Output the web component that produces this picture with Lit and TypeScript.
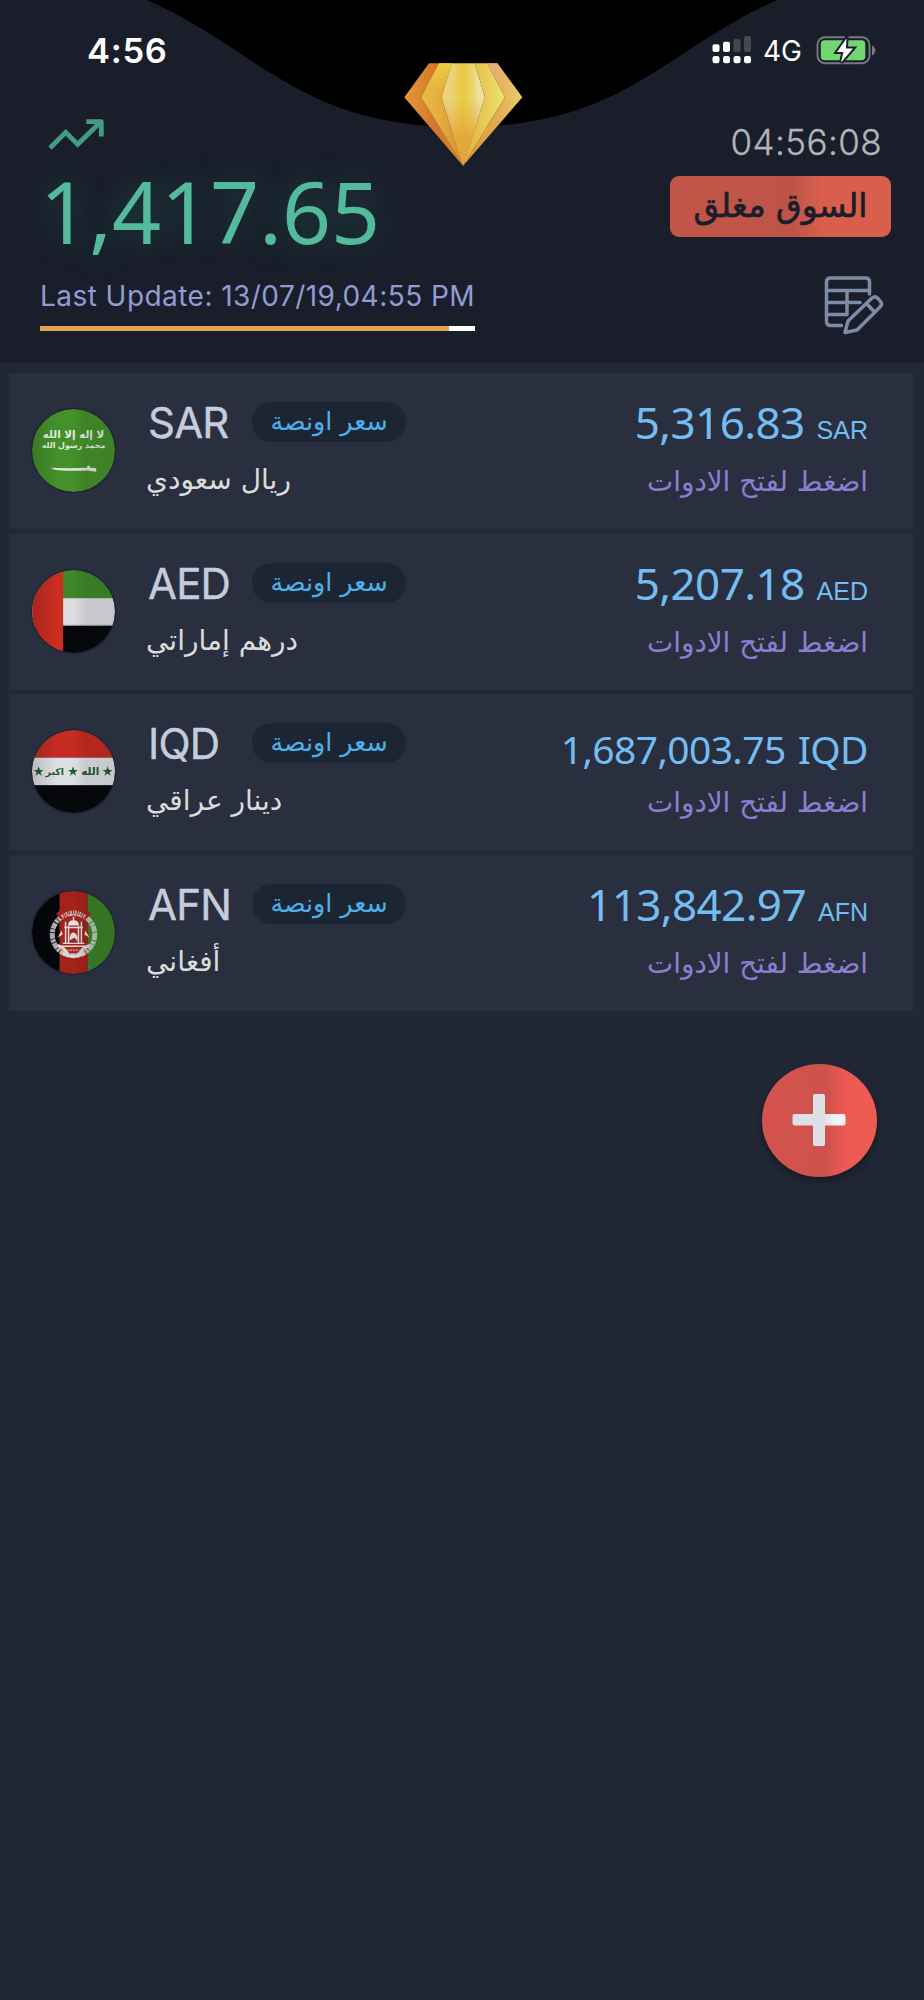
import { LitElement, html, css, svg } from "lit";
import { customElement, property } from "lit/decorators.js";
import { classMap } from "lit/directives/class-map.js";

interface Rate {
    code: string;
    name: string;
    amount: string;
    plain?: boolean;
}

const RATES: Rate[] = [
    { code: "SAR", name: "ريال سعودي", amount: "5,316.83" },
    { code: "AED", name: "درهم إماراتي", amount: "5,207.18" },
    { code: "IQD", name: "دينار عراقي", amount: "1,687,003.75", plain: true },
    { code: "AFN", name: "أفغاني", amount: "113,842.97" }
];

const STAR = "M0 -5.2L1.3 -1.6L5 -1.6L2 .7L3.1 4.3L0 2.1L-3.1 4.3L-2 .7L-5 -1.6L-1.3 -1.6Z";

const flags: Record<string, unknown> = {
    SAR: svg`
        <rect width="84" height="84" fill="#44902a"/>
        <text class="script" x="42" y="29" font-size="10.5" fill="#e4ebe0">لا إله إلا الله</text>
        <text class="script" x="42" y="39.5" font-size="8" fill="#e4ebe0">محمد رسول الله</text>
        <path d="M19 59.5Q38 60.5 56 59.5V57.5H58.5V59.3L65 60V63.5L56 62.2Q34 63 23 61.5Z" fill="#e1e6dc"/>`,
    AED: svg`
        <rect width="84" height="28.5" fill="#3d8828"/>
        <rect y="28.5" width="84" height="28" fill="#dcdde1"/>
        <rect y="56" width="84" height="28" fill="#07080b"/>
        <rect y="55.5" width="84" height="1.2" fill="#8d8f94"/>
        <rect width="31.5" height="84" fill="#cb2d21"/>`,
    IQD: svg`
        <rect width="84" height="28" fill="#c52b20"/>
        <rect y="28" width="84" height="28" fill="#dedfe3"/>
        <rect y="56" width="84" height="28" fill="#06080b"/>
        <path d=${STAR} transform="translate(6.7 42)" fill="#205c31"/>
        <path d=${STAR} transform="translate(41.5 42)" fill="#205c31"/>
        <path d=${STAR} transform="translate(76.5 42)" fill="#205c31"/>
        <text class="script" x="23" y="45.5" font-size="9.5" fill="#205c31">اكبر</text>
        <text class="script" x="59" y="45.500" font-size="10.5" fill="#205c31">الله</text>`,
    AFN: svg`
        <rect width="28" height="84" fill="#050609"/>
        <rect x="28" width="28.5" height="84" fill="#a3231b"/>
        <rect x="56.5" width="28" height="84" fill="#3a8028"/>
        <circle cx="42" cy="44" r="21.500" fill="none" stroke="#d9d9d9" stroke-width="5" stroke-dasharray="4.600 .7 2.300 .5" pathLength="104" opacity=".8"/>
        <path d="M27 26Q42 11 57 26" fill="none" stroke="#a3231b" stroke-width="8"/>
        <path d="M30 26Q42 16.500 54 26" fill="none" stroke="#c9a8a5" stroke-width="3.400" stroke-dasharray="2 1 1 .8"/>
        <path d="M36.5 35Q36.5 29.5 42 29.5Q47.500 29.5 47.500 35Z" fill="#e8e4e4"/>
        <path d="M42 26V30M34 31V53M50 31V53M37 35V53M47 35V53M32.500 37H51.5M31 53H53M30 56H54" stroke="#e0dcdc" stroke-width="1.500" fill="none"/>
        <path d="M38 50Q38 42 42 42Q47 43 46 51L43 47Z" fill="#dedada"/>
        <path d="M26 47L30 40L31 44ZM58 47L54 40L53 44Z" fill="#e6e2e2"/>
        <path d="M26 55Q34 58 36 64M58 55Q50 58 48 64M31 63Q42 69 53 63" fill="none" stroke="#dcd8d8" stroke-width="3"/>
        <path d="M36 60H48" stroke="#c78a86" stroke-width="2" stroke-dasharray="2 .8"/>`
};

@customElement("rate-row")
export class RateRow extends LitElement {
    @property({ attribute: false }) rate!: Rate;

    static styles = css`
        :host {
            display: flex;
            box-sizing: border-box;
            height: 156px;
            padding: 0 45px 0 23px;
            background: #292f3e;
        }
        .flag {
            flex: none;
            width: 83px;
            height: 83px;
            margin-top: 36px;
            border-radius: 50%;
            box-shadow: 0 0 1px 1px #1d2430;
        }
        .script {
            font-family: "DejaVu Sans", sans-serif;
            font-weight: bold;
            text-anchor: middle;
        }
        .info {
            flex: 1;
            padding: 29px 0 0 31px;
        }
        .title {
            display: flex;
            height: 40px;
        }
        .code {
            width: 104px;
            padding-left: 2px;
            font: 400 42px/41px Inter, sans-serif;
            letter-spacing: -0.8px;
            color: #c5ccdb;
            -webkit-text-stroke: 0.4px #c5ccdb;
        }
        .pill {
            width: 154px;
            border-radius: 20px;
            background: #1c2532;
            color: #4fafea;
            font: 25.3px/39px "DejaVu Sans", sans-serif;
            text-align: center;
        }
        .name {
            margin-top: 17px;
            font: 28px/41px "DejaVu Sans", sans-serif;
            color: #dcdcdc;
            direction: rtl;
            width: fit-content;
        }
        .price {
            display: flex;
            flex-direction: column;
            align-items: flex-end;
            padding-top: 29px;
            color: #74bcf1;
        }
        .amount {
            font: 400 44px/40px "Noto Sans", sans-serif;
            height: 40px;
            letter-spacing: -0.6px;
            white-space: pre;
        }
        .unit {
            font: 25px/30px "Liberation Sans", sans-serif;
            margin-left: 12px;
            letter-spacing: 0;
        }
        .amount--plain {
            font-size: 39px;
            line-height: 52px;
        }
        .amount--plain .unit {
            font: inherit;
            letter-spacing: -0.6px;
        }
        .hint {
            margin-top: 19px;
            font: 27.8px/41px "DejaVu Sans", sans-serif;
            color: #8d7dd0;
            direction: rtl;
        }
    `;

    render() {
        const { code, name, amount, plain } = this.rate;
        return html`
            <svg class="flag" viewBox="0 0 84 84">
                <defs>
                    <clipPath id="round"><circle cx="42" cy="42" r="42"/></clipPath>
                    <linearGradient id="shade">
                        <stop offset="0" stop-color="#000" stop-opacity=".16"/>
                        <stop offset=".3" stop-color="#000" stop-opacity="0"/>
                        <stop offset=".5" stop-color="#000" stop-opacity="0"/>
                        <stop offset=".65" stop-color="#000" stop-opacity=".09"/>
                        <stop offset="1" stop-color="#000" stop-opacity=".1"/>
                    </linearGradient>
                </defs>
                <g clip-path="url(#round)">
                    ${flags[code]}
                    <rect width="84" height="84" fill="url(#shade)"/>
                </g>
            </svg>
            <div class="info">
                <div class="title">
                    <span class="code">${code}</span>
                    <span class="pill">سعر اونصة</span>
                </div>
                <div class="name">${name}</div>
            </div>
            <div class="price">
                <div class=${classMap({ amount: true, "amount--plain": !!plain })}>${amount}<span class="unit">${code}</span></div>
                <div class="hint">اضغط لفتح الادوات</div>
            </div>
        `;
    }
}

@customElement("app-root")
export class AppRoot extends LitElement {
    static styles = css`
        :host {
            display: block;
            min-height: 2000px;
            background: #212735;
            font-family: Inter, sans-serif;
        }
        .header {
            position: relative;
            box-sizing: border-box;
            height: 362px;
            padding: 31px 33px 0 40px;
            background: #191e2a;
        }
        .curve {
            position: absolute;
            top: 0;
            left: 0;
        }
        .status {
            position: relative;
            display: flex;
            justify-content: space-between;
            height: 40px;
            padding: 0 15px 0 47px;
            color: #fff;
        }
        .time {
            font-weight: 600;
            font-size: 34.5px;
            line-height: 40px;
            letter-spacing: 0.7px;
        }
        .status-icons {
            display: flex;
            height: 40px;
        }
        .network {
            width: 53px;
            margin-left: 11px;
            font-size: 28px;
            line-height: 41px;
        }
        .board {
            position: relative;
            display: flex;
            justify-content: space-between;
        }
        .trend {
            display: block;
            margin: 44px 0 0 6px;
        }
        .gold {
            margin-top: 11px;
            font: 400 86px/90px "Noto Sans", sans-serif;
            letter-spacing: -0.15px;
            color: #53ba9c;
            text-shadow: 0 0 34px rgba(60, 180, 150, 0.32);
        }
        .updated {
            margin-top: 22px;
            font-size: 28px;
            line-height: 36px;
            letter-spacing: 0.45px;
            color: #929bd2;
            white-space: nowrap;
        }
        .progress {
            width: 435px;
            height: 5px;
            margin-top: 12px;
            background: #fff;
        }
        .progress-bar {
            height: 100%;
            background: #e2a24f;
        }
        .side {
            display: flex;
            flex-direction: column;
            align-items: flex-end;
        }
        .clock {
            margin: 51px 9px 0 0;
            font-weight: 300;
            font-size: 35px;
            line-height: 40px;
            letter-spacing: 0.4px;
            color: #b3b4bb;
            -webkit-text-stroke: 0.3px #b3b4bb;
        }
        .market {
            width: 221px;
            height: 61px;
            margin-top: 14px;
            border-radius: 9px;
            background: linear-gradient(90deg, #c25648, #bd5447 55%, #d95e4b 68%, #d95e4b);
            color: #191e2a;
            font: 33px/60px "DejaVu Sans", sans-serif;
            -webkit-text-stroke: 0.7px #191e2a;
            text-align: center;
        }
        .edit {
            margin: 38px 6px 0 0;
        }
        .rates {
            display: grid;
            gap: 4.67px;
            padding: 11px 11px 0 9px;
        }
        .add {
            display: flex;
            align-items: center;
            justify-content: center;
            box-sizing: border-box;
            width: 115px;
            height: 113px;
            margin: 53px 47px 0 auto;
            padding-right: 2px;
            border-radius: 50%;
            background: linear-gradient(90deg, #d5534e, #ce514d 56%, #ec5a52 72%, #ee5a52);
            box-shadow: 0 4px 10px rgba(0, 0, 0, 0.35);
        }
    `;

    private renderCurve() {
        return html`
            <svg class="curve" width="924" height="170">
                <defs>
                    <linearGradient id="g1"><stop offset="0" stop-color="#e39a35"/><stop offset=".55" stop-color="#d4752b"/><stop offset="1" stop-color="#dc8a31"/></linearGradient>
                    <linearGradient id="g2"><stop offset="0" stop-color="#e6bd45"/><stop offset=".5" stop-color="#e3aa3c"/><stop offset="1" stop-color="#d88c34"/></linearGradient>
                    <linearGradient id="g3"><stop offset="0" stop-color="#ebcf72"/><stop offset=".2" stop-color="#ecd47d"/><stop offset=".5" stop-color="#e8c941"/><stop offset=".7" stop-color="#ebd264"/><stop offset=".85" stop-color="#efe1a0"/><stop offset="1" stop-color="#eddd9d"/></linearGradient>
                    <linearGradient id="g4"><stop offset="0" stop-color="#e5ac3a"/><stop offset=".5" stop-color="#e7ca55"/><stop offset="1" stop-color="#ebe46f"/></linearGradient>
                    <linearGradient id="g5"><stop offset="0" stop-color="#dd8d30"/><stop offset=".5" stop-color="#dd9c43"/><stop offset="1" stop-color="#ebcc70"/></linearGradient>
                    <linearGradient id="fall" x1="0" y1="0" x2="0" y2="1"><stop offset=".35" stop-color="#e2a238" stop-opacity="0"/><stop offset=".75" stop-color="#e2a238" stop-opacity=".85"/></linearGradient>
                    <linearGradient id="shine" x1="0" y1="0" x2="0" y2="1"><stop offset="0" stop-color="#e3b184" stop-opacity=".9"/><stop offset=".4" stop-color="#e8cd62" stop-opacity=".2"/><stop offset="1" stop-color="#dd8b2f"/></linearGradient>
                    <linearGradient id="warm" x1="0" y1="0" x2="0" y2="1"><stop offset="0" stop-color="#ecd243"/><stop offset=".35" stop-color="#e6bb42" stop-opacity="0"/></linearGradient>
                </defs>
                <path d="M147 0C260 50 300 127 462 127C624 127 664 50 777 0Z" fill="#000"/>
                <path d="M429 63.300H440L421 97.300L463 165.700L404.300 97.300Z" fill="url(#g1)"/>
                <path d="M439.300 63.300H452L441.300 97.300L463 165.700L421 97.300Z" fill="url(#g2)"/>
                <path d="M439.300 63.300H452L441.300 97.300L463 165.700L421 97.300Z" fill="url(#warm)"/>
                <path d="M474.700 63.300H487.300L505 97.300L463 165.700L485 97.300Z" fill="url(#g4)"/>
                <path d="M487.300 63.300H497.300L522.300 97.300L463 165.700L505 97.300Z" fill="url(#g5)"/>
                <path d="M487.300 63.300H497.300L522.300 97.300L463 165.700L505 97.300Z" fill="url(#shine)"/>
                <path d="M452 63.300H474.700L485 97.300L463 165.700L441.300 97.300Z" fill="url(#g3)"/>
                <path d="M452 63.300H474.700L485 97.300L463 165.700L441.300 97.300Z" fill="url(#fall)"/>
            </svg>
        `;
    }

    private renderStatusIcons() {
        return html`
            <div class="status-icons">
                <svg width="40" height="40" fill="#fff">
                    <rect x=".5" y="13.300" width="7" height="7.700" rx="2"/>
                    <rect x="11" y="10.700" width="7" height="10.300" rx="2"/>
                    <rect x="21.500" y="8" width="7" height="13" rx="2" fill="#45484f"/>
                    <rect x="32" y="5" width="7" height="16" rx="2" fill="#45484f"/>
                    <rect x=".5" y="25" width="7" height="7.300" rx="2.200"/>
                    <rect x="11" y="25" width="7" height="7.300" rx="2.200"/>
                    <rect x="21.500" y="25" width="7" height="7.300" rx="2.200"/>
                    <rect x="32" y="25" width="7" height="7.300" rx="2.200"/>
                </svg>
                <span class="network">4G</span>
                <svg width="60" height="40">
                    <rect x="1.500" y="6.200" width="52" height="26" rx="7.500" fill="none" stroke="#777a81" stroke-width="1.900"/>
                    <rect x="4.800" y="9.300" width="44.500" height="20" rx="4" fill="#74d672"/>
                    <path d="M56 14.500Q59.300 16.500 59.300 19.500Q59.300 22.500 56 24.500Z" fill="#777a81"/>
                    <path d="M30.500 7.500L21 21H27.500L25 31.500L37 17.500H30Z" fill="#fff" stroke="#191e2a" stroke-width="4" paint-order="stroke"/>
                </svg>
            </div>
        `;
    }

    render() {
        const progress = 94;
        return html`
            <header class="header">
                ${this.renderCurve()}
                <div class="status">
                    <span class="time">4:56</span>
                    ${this.renderStatusIcons()}
                </div>
                <div class="board">
                    <div class="main">
                        <svg class="trend" width="62" height="40" fill="none" stroke="#459a83" stroke-width="4.800">
                            <path d="M4 33L19.700 17.300L31.700 29.300L54 7.500"/>
                            <path d="M40.300 6.700H55.300V21.500M51 7L55 11" stroke-linejoin="round"/>
                        </svg>
                        <div class="gold">1,417.65</div>
                        <div class="updated">Last Update: 13/07/19,04:55 PM</div>
                        <div class="progress">
                            <div class="progress-bar" style="width: ${progress}%"></div>
                        </div>
                    </div>
                    <div class="side">
                        <div class="clock">04:56:08</div>
                        <div class="market">السوق مغلق</div>
                        <svg class="edit" width="62" height="62" fill="none" stroke="#7e8ba6" stroke-width="3.500" stroke-linecap="round" stroke-linejoin="round">
                            <path d="M46.500 19V7Q46.500 3 42.500 3H7.500Q3.500 3 3.500 7V46.500Q3.500 50.500 7.500 50.500H18.500"/>
                            <path d="M3.500 15.500H46.500M3.500 27.500H37M3.500 39.500H24V15.500"/>
                            <path d="M22 57.500L25 46L49 23Q52 20.500 55 23.500L57.500 26.500Q60 29 57 32L34 55Z"/>
                            <path d="M44 29L51.500 37"/>
                        </svg>
                    </div>
                </div>
            </header>
            <main class="rates">
                ${RATES.map(rate => html`<rate-row .rate=${rate}></rate-row>`)}
            </main>
            <div class="add">
                <svg width="54" height="54">
                    <defs>
                        <linearGradient id="plus"><stop offset=".6" stop-color="#dde0e5"/><stop offset=".85" stop-color="#f3f4f8"/></linearGradient>
                    </defs>
                    <path d="M23 1H31Q33 1 33 3V21H51.500Q53.500 21 53.500 23V30.500Q53.500 32.500 51.500 32.500H33V51Q33 53 31 53H23Q21 53 21 51V32.500H2.500Q.5 32.500 .5 30.500V23Q.5 21 2.500 21H21V3Q21 1 23 1Z" fill="url(#plus)"/>
                </svg>
            </div>
        `;
    }
}
